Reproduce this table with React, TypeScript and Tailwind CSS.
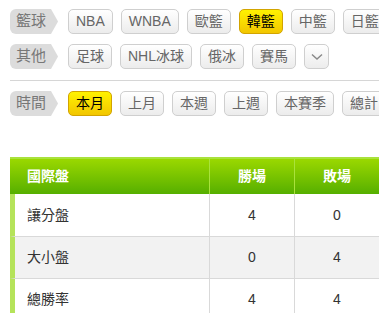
import React from "react";

const filters = [
  { label: "籃球", items: ["NBA", "WNBA", "歐籃", "韓籃", "中籃", "日籃"], active: "韓籃" },
  { label: "其他", items: ["足球", "NHL冰球", "俄冰", "賽馬"], active: "", more: true },
];

const timeItems = ["本月", "上月", "本週", "上週", "本賽季", "總計"];

const rows = [
  { name: "讓分盤", win: 4, lose: 0 },
  { name: "大小盤", win: 0, lose: 4 },
  { name: "總勝率", win: 4, lose: 4 },
];

function Tag({ label }: { label: string }) {
  return (
    <div className="shrink-0 h-[25px] w-[48px] mr-[10px] pl-[6px] flex items-center bg-[#dcdcdc] text-[#777] text-[15px] rounded-l-[6px] [clip-path:polygon(0_0,calc(100%-7px)_0,100%_50%,calc(100%-7px)_100%,0_100%)]">
      {label}
    </div>
  );
}

function Btn({ text, active }: { text: string; active?: boolean }) {
  return (
    <div
      className={`shrink-0 h-[25px] px-[7px] mr-[8px] flex items-center rounded-[5px] border text-[14px] whitespace-nowrap ${
        active
          ? "bg-linear-to-b from-[#fff200] to-[#f2c600] border-[#d2a400] text-black"
          : "bg-linear-to-b from-white to-[#ececec] border-[#cfcfcf] text-[#666]"
      }`}
    >
      {text}
    </div>
  );
}

function FilterRow({ label, items, active, more }: { label: string; items: string[]; active: string; more?: boolean }) {
  return (
    <div className="flex items-center">
      <Tag label={label} />
      {items.map((it) => (
        <Btn key={it} text={it} active={it === active} />
      ))}
      {more && (
        <div className="shrink-0 h-[25px] w-[25px] flex items-center justify-center rounded-[5px] border border-[#cfcfcf] bg-linear-to-b from-white to-[#ececec]">
          <svg width="12" height="8" viewBox="0 0 12 8" fill="none">
            <path d="M1 1.5L6 6L11 1.5" stroke="#888" strokeWidth="1.4" />
          </svg>
        </div>
      )}
    </div>
  );
}

export default function App() {
  return (
    <div className="w-[379px] h-[313px] overflow-hidden bg-white font-['Liberation_Sans','Noto_Sans_CJK_TC',sans-serif]">
      <div className="pl-[10px] pt-[9px]">
        <div className="flex flex-col gap-[10px]">
          {filters.map((f) => (
            <FilterRow key={f.label} label={f.label} items={f.items} active={f.active} more={f.more} />
          ))}
        </div>
        <div className="h-px bg-[#d6d6d6] mt-[11px] mb-[10px]" />
        <div className="flex items-center">
          <Tag label="時間" />
          {timeItems.map((t) => (
            <Btn key={t} text={t} active={t === "本月"} />
          ))}
        </div>
      </div>

      {/* Table */}
      <div className="ml-[10px] mt-[41px] w-[454px]">
        <div className="flex h-[37px] border-t-2 border-[#a9e23c] bg-linear-to-b from-[#9ad800] to-[#55af00] text-white text-[14px] font-bold">
          <div className="w-[199px] pl-[17px] flex items-center">國際盤</div>
          <div className="w-[85px] border-l border-[#a9e23c] flex items-center justify-center">勝場</div>
          <div className="w-[85px] border-l border-[#a9e23c] flex items-center justify-center">敗場</div>
          <div className="w-[85px] border-l border-[#a9e23c] flex items-center justify-center"></div>
        </div>
        {rows.map((r, i) => (
          <div
            key={r.name}
            className={`flex h-[42px] border-l-[5px] border-l-[#b5e35a] text-[14px] text-[#333] ${
              i > 0 ? "border-t border-t-[#d9d9d9]" : ""
            } ${i % 2 === 1 ? "bg-[#f2f2f2]" : "bg-white"}`}
          >
            <div className="w-[194px] pl-[12px] flex items-center">{r.name}</div>
            <div className="w-[85px] border-l border-[#d9d9d9] flex items-center justify-center">{r.win}</div>
            <div className="w-[85px] border-l border-[#d9d9d9] flex items-center justify-center">{r.lose}</div>
            <div className="w-[85px] border-l border-[#d9d9d9]"></div>
          </div>
        ))}
      </div>
    </div>
  );
}
